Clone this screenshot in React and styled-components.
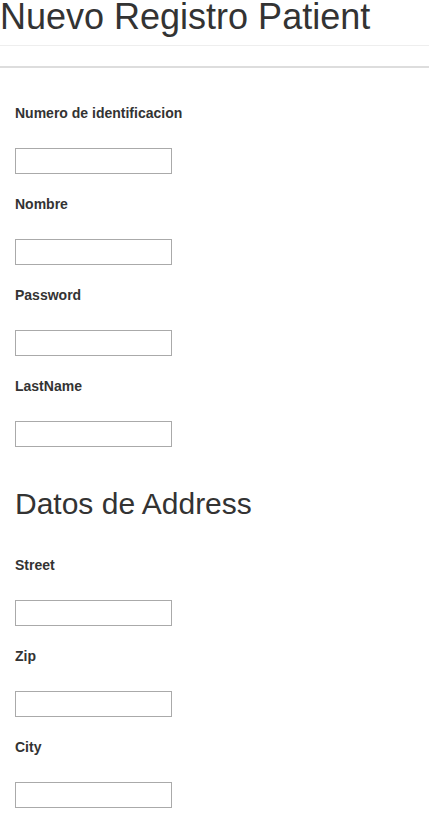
import React from 'react';
import styled, { createGlobalStyle } from 'styled-components';

const GlobalStyle = createGlobalStyle`
    body {
        margin: 0;
        background: #fff;
        font-family: "Liberation Sans", Arial, sans-serif;
        color: #333;
    }
`;

const PageHeader = styled.div`
    padding-bottom: 11px;
    border-bottom: 1px solid #eee;
    margin-bottom: 20px;
`;

const Title = styled.h1`
    margin: 0;
    font-size: 36px;
    line-height: 34px;
    font-weight: normal;
    color: #333;
`;

const Divider = styled.hr`
    margin: 0;
    border: 0;
    height: 2px;
    background: #ddd;
`;

const Form = styled.form`
    padding: 35px 15px 0;
`;

const SectionTitle = styled.h2`
    margin: 40px 0 35px;
    font-size: 30px;
    line-height: 33px;
    font-weight: normal;
    color: #333;
`;

const Field = styled.div`
    margin-bottom: 20px;
`;

const Label = styled.label`
    display: block;
    font-size: 14px;
    line-height: 20px;
    font-weight: bold;
    color: #333;
    margin-bottom: 25px;
`;

const Input = styled.input`
    display: block;
    box-sizing: border-box;
    width: 157px;
    height: 26px;
    margin: 0;
    padding: 2px 4px;
    border: 1px solid #aaa;
    border-radius: 0;
    background: #fff;
    font: 13px "Liberation Sans", Arial, sans-serif;
    outline: none;
`;

const patientFields = [
    { name: 'identificacion', label: 'Numero de identificacion' },
    { name: 'nombre', label: 'Nombre' },
    { name: 'password', label: 'Password', type: 'password' },
    { name: 'lastName', label: 'LastName' },
];

const addressFields = [
    { name: 'street', label: 'Street' },
    { name: 'zip', label: 'Zip' },
    { name: 'city', label: 'City' },
];

const FormField = ({ name, label, type = 'text' }) => (
    <Field>
        <Label htmlFor={name}>{label}</Label>
        <Input id={name} name={name} type={type} />
    </Field>
);

const App = () => {
    return (
        <>
            <GlobalStyle />
            <PageHeader>
                <Title>Nuevo Registro Patient</Title>
            </PageHeader>
            <Divider />
            <Form autoComplete="off" onSubmit={(e) => e.preventDefault()}>
                {patientFields.map((f) => (
                    <FormField key={f.name} {...f} />
                ))}
                <SectionTitle>Datos de Address</SectionTitle>
                {addressFields.map((f) => (
                    <FormField key={f.name} {...f} />
                ))}
            </Form>
        </>
    );
};

export default App;
